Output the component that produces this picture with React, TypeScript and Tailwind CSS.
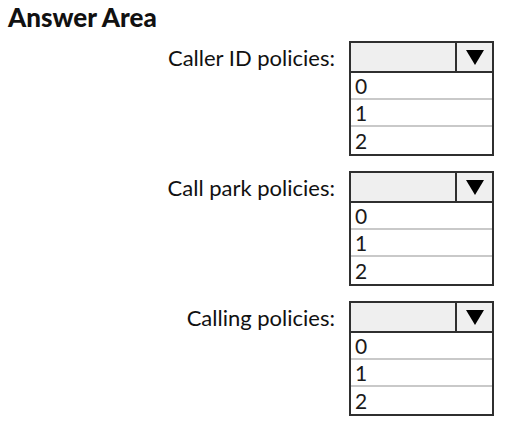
import React from 'react';

const policies = ['Caller ID policies:', 'Call park policies:', 'Calling policies:'];
const options = ['0', '1', '2'];

const DropDown: React.FC = () => (
  <div className="w-[145px]">
    {/* closed select header */}
    <div className="flex h-8 border-2 border-[#2f2f2f] bg-[#efefef]">
      <div className="flex-1" />
      <div className="flex w-[37px] items-center justify-center border-l-2 border-[#2f2f2f]">
        <svg width="18" height="15" viewBox="0 0 18 15">
          <polygon points="0,0 18,0 9,15" fill="#000" />
        </svg>
      </div>
    </div>
    {/* option list */}
    <div className="border-2 border-t-0 border-[#2f2f2f] bg-white">
      {options.map((o, i) => (
        <div
          key={o}
          className={`flex h-[27px] items-center pl-1 text-[21px] leading-none text-[#1a1a1a] ${
            i < options.length - 1 ? 'border-b-2 border-[#c9c9c9]' : ''
          }`}
        >
          {o}
        </div>
      ))}
    </div>
  </div>
);

export default function App() {
  return (
    <div
      className="h-[431px] w-[506px] bg-white text-[#111]"
      style={{ fontFamily: 'Lato, "Open Sans", sans-serif' }}
    >
      <h1 className="pl-2 pt-[2px] text-[26px] font-black leading-[30px]">Answer Area</h1>
      <div className="mt-[9px] flex flex-col gap-[15px] pr-3">
        {policies.map((label) => (
          <div key={label} className="flex items-start justify-end gap-[14px]">
            <div className="flex h-8 items-center text-[22px]">{label}</div>
            <DropDown />
          </div>
        ))}
      </div>
    </div>
  );
}
